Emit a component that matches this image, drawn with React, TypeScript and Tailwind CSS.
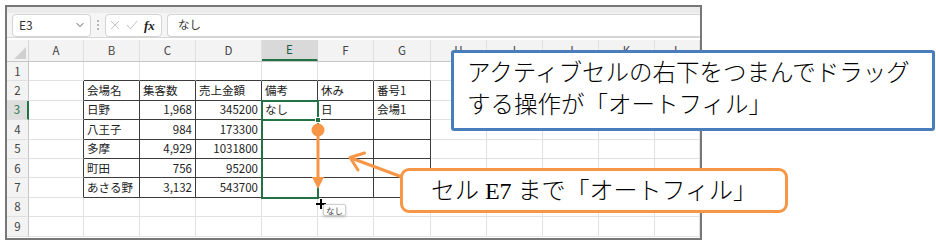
import { ChevronDown } from 'lucide-react'

const COLS = ['A', 'B', 'C', 'D', 'E', 'F', 'G', 'H', 'I', 'J', 'K', 'L']

const TABLE = [
  ['会場名', '集客数', '売上金額', '備考', '休み', '番号1'],
  ['日野', '1,968', '345200', 'なし', '日', '会場1'],
  ['八王子', '984', '173300', '', '', ''],
  ['多摩', '4,929', '1031800', '', '', ''],
  ['町田', '756', '95200', '', '', ''],
  ['あさる野', '3,132', '543700', '', '', ''],
]

const GRID = 'grid grid-cols-[22px_55px_56px_56px_66px_56px_56px_57px_56px_56px_56px_56px_1fr]'
const SHEET_FONT = "font-['Noto_Sans_CJK_JP','Noto_Sans',sans-serif]"
const CALLOUT_FONT = "font-['Liberation_Serif','Noto_Sans_CJK_JP',serif] font-light"

function cellText(row: number, col: number) {
  // table sits at B2:G7
  if (row < 2 || row > 7 || col < 1 || col > 6) return ''
  return TABLE[row - 2][col - 1]
}

function Cell({ row, col }: { row: number; col: number }) {
  const text = cellText(row, col)
  const blackRight = row >= 2 && row <= 7 && col <= 6
  const blackBottom = col >= 1 && col <= 6 && row >= 1 && row <= 7
  const numeric = row >= 3 && (col === 2 || col === 3)
  return (
    <div
      className={[
        'flex items-center overflow-visible whitespace-nowrap px-[3px] text-[11.5px] text-[#222] border-r border-b',
        blackRight ? 'border-r-[#3c3c3c]' : 'border-r-[#e1e1e1]',
        blackBottom ? 'border-b-[#3c3c3c]' : 'border-b-[#e1e1e1]',
        numeric ? 'justify-end' : 'justify-start',
      ].join(' ')}
    >
      {text}
    </div>
  )
}

function FormulaBar() {
  return (
    <div className="flex h-[25px] items-center gap-0 border-b border-[#d6d6d6] bg-[#f5f5f5] pl-[5px]">
      <div className="flex h-[23px] w-[79px] items-center justify-between rounded-[4px] border border-[#d4d4d4] bg-white pl-[6px] pr-[4px] text-[12px] text-[#333]">
        <span>E3</span>
        <ChevronDown className="h-3 w-3 text-[#555]" strokeWidth={2} />
      </div>
      <div className="mx-[6px] flex flex-col gap-[2px]">
        <span className="h-[2px] w-[2px] rounded-full bg-[#a0a0a0]" />
        <span className="h-[2px] w-[2px] rounded-full bg-[#a0a0a0]" />
        <span className="h-[2px] w-[2px] rounded-full bg-[#a0a0a0]" />
      </div>
      <div className="flex h-[23px] w-[57px] items-center gap-[6px] rounded-[4px] border border-[#d4d4d4] bg-white pl-[4px]">
        <svg viewBox="0 0 10 10" className="h-[10px] w-[10px]" fill="none" stroke="#c4c4c4" strokeWidth="1">
          <path d="M1 1 L9 9 M9 1 L1 9" />
        </svg>
        <svg viewBox="0 0 12 10" className="h-[10px] w-[12px]" fill="none" stroke="#c4c4c4" strokeWidth="1">
          <path d="M1 5 L4.5 9 L11 1" />
        </svg>
        <span className="font-['Liberation_Serif',serif] text-[13px] font-bold italic leading-none text-[#222]">fx</span>
      </div>
      <div className="ml-[5px] flex h-[23px] flex-1 items-center rounded-l-[4px] border border-r-0 border-[#d4d4d4] bg-white pl-[10px] text-[11.5px] text-[#333]">
        なし
      </div>
    </div>
  )
}

function HeaderRow() {
  return (
    <div className={`${GRID} h-[22px] bg-[#f3f3f3] border-b border-[#c6c6c6]`}>
      <div className="relative border-r border-[#d6d6d6]">
        <svg viewBox="0 0 12 12" className="absolute bottom-[2px] right-[2px] h-[12px] w-[12px]">
          <polygon points="12,0 12,12 0,12" fill="#d0d0d0" />
        </svg>
      </div>
      {COLS.map((c) =>
        c === 'E' ? (
          <div
            key={c}
            className="flex items-center justify-center border-b-2 border-r border-b-[#217346] border-r-[#d6d6d6] bg-[#d9d9d9] text-[11.5px] text-[#1e5c3a]"
          >
            {c}
          </div>
        ) : (
          <div key={c} className="flex items-center justify-center border-r border-[#e0e0e0] text-[11.5px] text-[#444]">
            {c}
          </div>
        )
      )}
    </div>
  )
}

function SheetRows() {
  const rows = [1, 2, 3, 4, 5, 6, 7, 8, 9]
  return (
    <div className="relative">
      {rows.map((r) => (
        <div key={r} className={`${GRID} h-[19.4px]`}>
          {r === 3 ? (
            <div className="flex items-center justify-center border-b border-r-2 border-b-[#e0e0e0] border-r-[#217346] bg-[#dedede] text-[11.5px] text-[#217346]">
              {r}
            </div>
          ) : (
            <div className="flex items-center justify-center border-b border-r border-b-[#e0e0e0] border-r-[#c6c6c6] bg-[#f3f3f3] text-[11.5px] text-[#444]">
              {r}
            </div>
          )}
          {COLS.map((_, ci) => (
            <Cell key={ci} row={r} col={ci} />
          ))}
        </div>
      ))}
      {/* fill range E3:E7 */}
      <div className="absolute left-[254px] top-[38px] h-[99px] w-[58px] border-2 border-[#217346]" />
      <div className="absolute left-[254px] top-[57px] h-[2px] w-[58px] bg-[#217346]" />
      <div className="absolute left-[308px] top-[55px] h-[6px] w-[6px] border border-white bg-[#217346]" />
    </div>
  )
}

export default function App() {
  return (
    <div className={`relative h-[244px] w-[936px] overflow-hidden bg-white pl-[5px] pt-[5px] ${SHEET_FONT}`}>
      <div className="flex h-[235px] w-[697px] flex-col overflow-hidden border-2 border-[#777]">
        <div className="h-[6px] bg-[#ebebeb]" />
        <FormulaBar />
        <div className="h-[2px] bg-white" />
        <HeaderRow />
        <SheetRows />
      </div>

      {/* arrows */}
      <svg className="pointer-events-none absolute left-0 top-0 h-[244px] w-[936px]" viewBox="0 0 936 244" fill="none">
        <circle cx="318" cy="130" r="6.5" fill="#f79646" />
        <line x1="318" y1="130" x2="318" y2="180" stroke="#f79646" strokeWidth="3" />
        <polygon points="312,177 324,177 318,189" fill="#f79646" />
        <line x1="351" y1="158" x2="402" y2="177" stroke="#f79646" strokeWidth="3" strokeLinecap="round" />
        <path d="M364.5 153 L350 157.5 L358 170" stroke="#f79646" strokeWidth="3" strokeLinecap="round" strokeLinejoin="round" />
      </svg>

      {/* fill cursor + tooltip */}
      <div className="absolute left-[316px] top-[199px] h-[10px] w-[10px]">
        <div className="absolute left-[4px] top-0 h-[10px] w-[2px] bg-black" />
        <div className="absolute left-0 top-[4px] h-[2px] w-[10px] bg-black" />
      </div>
      <div className="absolute left-[323px] top-[204px] flex h-[12px] items-center rounded-[2px] border border-[#cfcfcf] bg-white px-[2px] text-[8.5px] leading-none text-[#444] shadow-[0_1px_3px_rgba(0,0,0,0.2)]">
        なし
      </div>

      {/* callouts */}
      <div
        className={`absolute left-[451px] top-[50px] h-[81px] w-[484px] rounded-[3px] border-[3px] border-[#4a7ebb] bg-white pl-[13px] pt-[4px] text-[23.5px] leading-[32px] text-black ${CALLOUT_FONT}`}
      >
        <p>アクティブセルの右下をつまんでドラッグ</p>
        <p>する操作が「オートフィル」</p>
      </div>
      <div
        className={`absolute left-[400px] top-[168px] flex h-[45px] w-[388px] items-center justify-center rounded-[9px] border-[3px] border-[#f79646] bg-white text-[24px] text-black ${CALLOUT_FONT}`}
      >
        セル E7 まで「オートフィル」
      </div>
    </div>
  )
}
